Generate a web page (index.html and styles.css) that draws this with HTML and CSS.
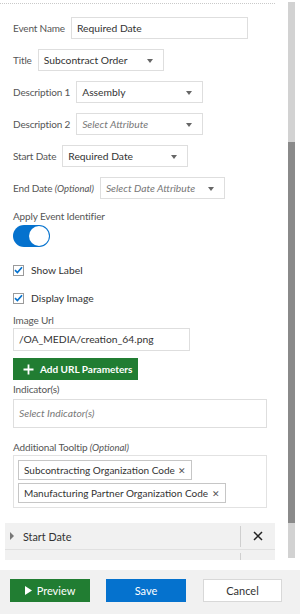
FILE: index.html
```html
<!DOCTYPE html>
<html lang="en">

<head>
    <meta charset="UTF-8">
    <meta name="viewport" content="width=device-width, initial-scale=1.0">
    <title>Event Settings</title>
    <link rel="stylesheet" href="styles.css">
</head>

<body>

    <div class="screen">
        <div class="main">
            <div class="scroller">
                <div class="top-line"></div>

                <div class="form">
                    <div class="field-row first">
                        <span class="label">Event Name</span>
                        <div class="input w-name">Required Date</div>
                    </div>
                    <div class="field-row">
                        <span class="label">Title</span>
                        <div class="input select w-title">Subcontract Order</div>
                    </div>
                    <div class="field-row">
                        <span class="label">Description 1</span>
                        <div class="input select w-desc">Assembly</div>
                    </div>
                    <div class="field-row">
                        <span class="label">Description 2</span>
                        <div class="input select w-desc placeholder">Select Attribute</div>
                    </div>
                    <div class="field-row">
                        <span class="label">Start Date</span>
                        <div class="input select w-start">Required Date</div>
                    </div>
                    <div class="field-row">
                        <span class="label">End Date <em class="optional">(Optional)</em></span>
                        <div class="input select w-end placeholder">Select Date Attribute</div>
                    </div>

                    <div class="label block-label apply-label">Apply Event Identifier</div>
                    <div class="toggle"><div class="knob"></div></div>

                    <div class="check-row show-label">
                        <span class="checkbox">
                            <svg width="9" height="8" viewBox="0 0 9 8"><path d="M1 4.2 L3.4 6.5 L8 1.2" fill="none" stroke="#0572ce" stroke-width="1.7"/></svg>
                        </span>
                        <span class="check-text">Show Label</span>
                    </div>
                    <div class="check-row display-image">
                        <span class="checkbox">
                            <svg width="9" height="8" viewBox="0 0 9 8"><path d="M1 4.2 L3.4 6.5 L8 1.2" fill="none" stroke="#0572ce" stroke-width="1.7"/></svg>
                        </span>
                        <span class="check-text">Display Image</span>
                    </div>

                    <div class="label block-label url-label">Image Url</div>
                    <div class="input w-url">/OA_MEDIA/creation_64.png</div>

                    <button class="btn-green add-params">
                        <svg width="11" height="11" viewBox="0 0 11 11"><path d="M5.5 0.5 V10.5 M0.5 5.5 H10.5" stroke="#fff" stroke-width="1.8"/></svg>
                        Add URL Parameters
                    </button>

                    <div class="label block-label indicator-label">Indicator(s)</div>
                    <div class="input wide tall placeholder">Select Indicator(s)</div>

                    <div class="label block-label tooltip-label">Additional Tooltip <em class="optional">(Optional)</em></div>
                    <div class="chip-box">
                        <span class="chip">Subcontracting Organization Code <span class="chip-x">✕</span></span>
                        <span class="chip">Manufacturing Partner Organization Code <span class="chip-x">✕</span></span>
                    </div>
                </div>

                <div class="accordion">
                    <div class="acc-item">
                        <span class="acc-arrow"></span>
                        <span class="acc-title">Start Date</span>
                        <span class="acc-sep"></span>
                        <svg class="acc-close" width="10" height="10" viewBox="0 0 10 10"><path d="M1 1 L9 9 M9 1 L1 9" stroke="#222" stroke-width="1.5"/></svg>
                    </div>
                    <div class="acc-item next">
                        <span class="acc-title"></span>
                        <span class="acc-sep"></span>
                    </div>
                </div>
            </div>

            <div class="scrollbar"><div class="thumb"></div></div>
        </div>

        <div class="footer">
            <button class="foot-btn preview">
                <svg width="7" height="9" viewBox="0 0 7 9"><path d="M0 0 L7 4.5 L0 9 Z" fill="#fff"/></svg>
                Preview
            </button>
            <button class="foot-btn save">Save</button>
            <button class="foot-btn cancel">Cancel</button>
        </div>
    </div>

</body>

</html>
```

FILE: styles.css
```css
body {
    margin: 0;
    background: #fff;
    font-family: Lato, "Open Sans", sans-serif;
    color: #333;
}

.screen {
    width: 300px;
    height: 614px;
    display: flex;
    flex-direction: column;
    overflow: hidden;
}

.main {
    height: 570px;
    display: flex;
}

.scroller {
    width: 275px;
    height: 560px;
    overflow: hidden;
}

.top-line {
    margin-top: 3px;
    border-top: 1px dotted #c9c9c9;
}

.form {
    padding-left: 13px;
    display: flex;
    flex-direction: column;
    align-items: flex-start;
}

.label {
    font-size: 10px;
    letter-spacing: -0.15px;
    color: #555;
    line-height: 14px;
    white-space: nowrap;
}

.optional {
    font-size: 9.5px;
    letter-spacing: 0;
}

.field-row {
    display: flex;
    align-items: center;
    gap: 6px;
    margin-top: 10px;
}

.field-row.first {
    margin-top: 13px;
}

.input {
    box-sizing: border-box;
    height: 22px;
    border: 1px solid #dedede;
    background: #fff;
    font-size: 10.3px;
    line-height: 20px;
    padding-left: 5px;
    color: #333;
    white-space: nowrap;
    position: relative;
}

.input.placeholder {
    font-style: italic;
    color: #777;
}

.select::after {
    content: "";
    position: absolute;
    right: 10px;
    top: 9px;
    border-left: 3px solid transparent;
    border-right: 3px solid transparent;
    border-top: 4px solid #666;
}

.w-name { width: 177px; }
.w-title { width: 126px; }
.w-desc { width: 127px; }
.w-start { width: 126px; }
.w-end { width: 125px; }
.w-url { width: 177px; height: 23px; margin-top: 1px; }

.wide {
    width: 254px;
}

.tall {
    height: 29px;
    line-height: 27px;
    margin-top: 3px;
}

.apply-label { margin-top: 10px; }
.url-label { margin-top: 8px; }
.indicator-label { margin-top: 2px; }
.tooltip-label { margin-top: 12px; }

.toggle {
    margin-top: 2px;
    width: 37px;
    height: 22px;
    border-radius: 11px;
    background: #0572ce;
    display: flex;
    justify-content: flex-end;
    align-items: center;
    padding-right: 1px;
    box-sizing: border-box;
}

.knob {
    width: 20px;
    height: 20px;
    border-radius: 50%;
    background: #fff;
}

.check-row {
    display: flex;
    align-items: center;
    gap: 7px;
    height: 14px;
}

.show-label { margin-top: 16px; }
.display-image { margin-top: 14px; }

.checkbox {
    box-sizing: border-box;
    width: 11px;
    height: 11px;
    border: 1px solid #9a9a9a;
    background: #fff;
    display: flex;
    align-items: center;
    justify-content: center;
}

.check-text {
    font-size: 10.3px;
    color: #333;
}

.btn-green {
    margin-top: 7px;
    width: 125px;
    height: 22px;
    border: 0;
    background: #217d32;
    color: #fff;
    font-family: Lato, sans-serif;
    font-size: 10px;
    font-weight: 700;
    white-space: nowrap;
    display: flex;
    align-items: center;
    gap: 6px;
    padding: 0 0 0 10px;
}

.chip-box {
    box-sizing: border-box;
    width: 254px;
    height: 53px;
    border: 1px solid #e2e2e2;
    padding: 4px 0 0 4px;
    display: flex;
    flex-direction: column;
    align-items: flex-start;
    gap: 3px;
}

.chip {
    box-sizing: border-box;
    height: 20px;
    border: 1px solid #c6c6c6;
    background: #fff;
    font-size: 10px;
    line-height: 18px;
    padding: 0 5px;
    color: #333;
    white-space: nowrap;
}

.chip-x {
    font-size: 9px;
    color: #555;
    margin-left: 1px;
}

.accordion {
    margin: 15px 0 0 5px;
    width: 270px;
    background: #f1f1f1;
}

.acc-item {
    height: 26px;
    display: flex;
    align-items: center;
    border-bottom: 1px solid #e0e0e0;
}

.acc-arrow {
    margin-left: 5px;
    border-top: 4px solid transparent;
    border-bottom: 4px solid transparent;
    border-left: 4px solid #777;
}

.acc-title {
    margin-left: 9px;
    font-size: 10.8px;
    color: #333;
    flex: 1;
}

.acc-sep {
    width: 1px;
    height: 21px;
    background: #cfcfcf;
    margin-right: 12px;
}

.acc-close {
    margin-right: 12px;
}

.acc-item.next .acc-sep {
    margin-right: 34px;
}

.scrollbar {
    margin: 2px 0 0 13px;
    width: 7px;
    height: 556px;
    background: #d2d2d2;
    padding-top: 140px;
    box-sizing: border-box;
}

.thumb {
    height: 381px;
    background: #8a8a8a;
}

.footer {
    height: 44px;
    background: #f1f1f1;
    display: flex;
    align-items: flex-start;
    padding: 9px 0 0 10px;
    box-sizing: border-box;
    gap: 16px;
}

.foot-btn {
    height: 23px;
    width: 80px;
    border: 0;
    font-family: Lato, sans-serif;
    font-size: 11px;
    display: flex;
    align-items: center;
    justify-content: center;
    gap: 5px;
    padding: 0;
}

.preview {
    background: #217d32;
    color: #fff;
}

.save {
    background: #0572ce;
    color: #fff;
}

.cancel {
    margin-left: 1px;
    width: 79px;
    background: #fff;
    color: #333;
    border: 1px solid #d8d8d8;
}
```
